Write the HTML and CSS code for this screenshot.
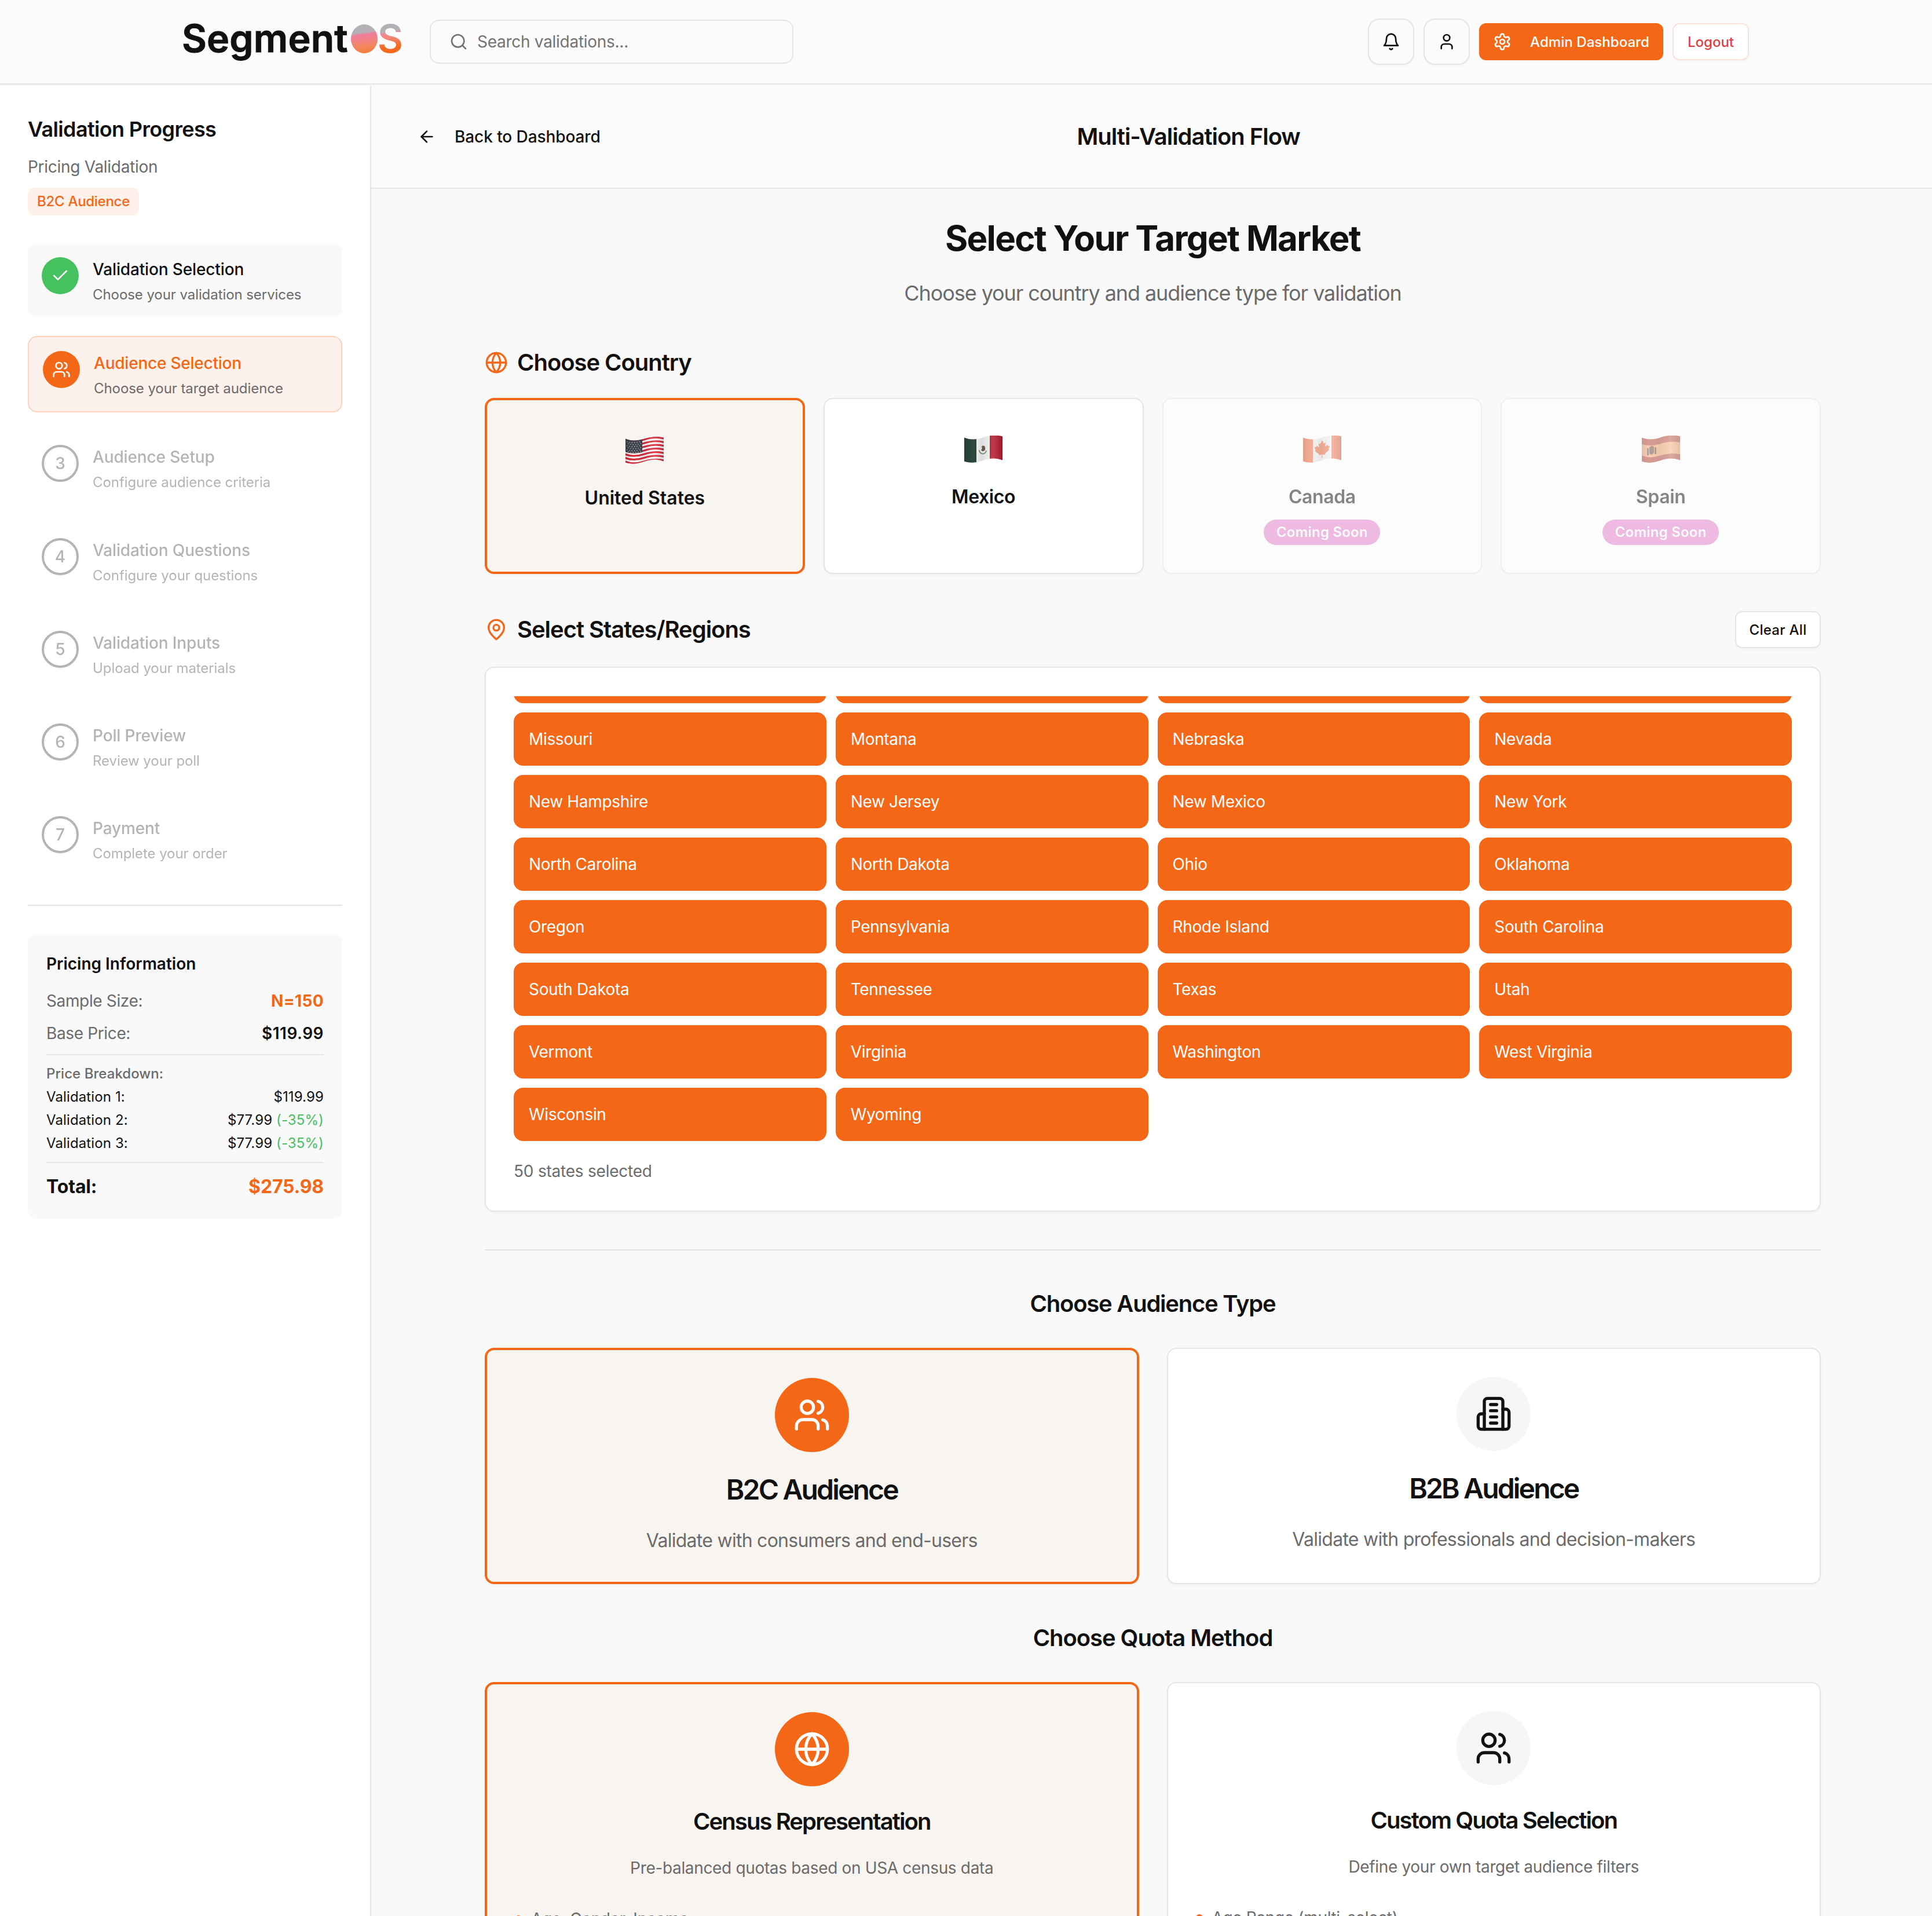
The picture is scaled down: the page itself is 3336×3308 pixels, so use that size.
FILE: index.html
```
<!DOCTYPE html>
<html lang="en">
  <head>
    <meta charset="utf-8">
    <title>SegmentOS</title>
    <link rel="stylesheet" href="styles.css">
  </head>

  <body>

    <!-- shared icons -->
    <svg class="sprite" width="0" height="0">
      <symbol id="icon-search" viewBox="0 0 24 24"><circle cx="11" cy="11" r="8"/><path d="m21 21-4.3-4.3"/></symbol>
      <symbol id="icon-bell" viewBox="0 0 24 24"><path d="M6 8a6 6 0 0 1 12 0c0 7 3 9 3 9H3s3-2 3-9"/><path d="M10.3 21a1.94 1.94 0 0 0 3.4 0"/></symbol>
      <symbol id="icon-user" viewBox="0 0 24 24"><path d="M19 21v-2a4 4 0 0 0-4-4H9a4 4 0 0 0-4 4v2"/><circle cx="12" cy="7" r="4"/></symbol>
      <symbol id="icon-settings" viewBox="0 0 24 24"><path d="M12.22 2h-.44a2 2 0 0 0-2 2v.18a2 2 0 0 1-1 1.73l-.43.25a2 2 0 0 1-2 0l-.15-.08a2 2 0 0 0-2.73.73l-.22.38a2 2 0 0 0 .73 2.73l.15.1a2 2 0 0 1 1 1.72v.51a2 2 0 0 1-1 1.74l-.15.09a2 2 0 0 0-.73 2.73l.22.38a2 2 0 0 0 2.73.73l.15-.08a2 2 0 0 1 2 0l.43.25a2 2 0 0 1 1 1.73V20a2 2 0 0 0 2 2h.44a2 2 0 0 0 2-2v-.18a2 2 0 0 1 1-1.73l.43-.25a2 2 0 0 1 2 0l.15.08a2 2 0 0 0 2.73-.73l.22-.39a2 2 0 0 0-.73-2.73l-.15-.08a2 2 0 0 1-1-1.74v-.5a2 2 0 0 1 1-1.74l.15-.09a2 2 0 0 0 .73-2.73l-.22-.38a2 2 0 0 0-2.73-.73l-.15.08a2 2 0 0 1-2 0l-.43-.25a2 2 0 0 1-1-1.73V4a2 2 0 0 0-2-2z"/><circle cx="12" cy="12" r="3"/></symbol>
      <symbol id="icon-arrow-left" viewBox="0 0 24 24"><path d="m12 19-7-7 7-7"/><path d="M19 12H5"/></symbol>
      <symbol id="icon-check" viewBox="0 0 24 24"><path d="M20 6 9 17l-5-5"/></symbol>
      <symbol id="icon-users" viewBox="0 0 24 24"><path d="M16 21v-2a4 4 0 0 0-4-4H6a4 4 0 0 0-4 4v2"/><circle cx="9" cy="7" r="4"/><path d="M22 21v-2a4 4 0 0 0-3-3.87"/><path d="M16 3.13a4 4 0 0 1 0 7.75"/></symbol>
      <symbol id="icon-globe" viewBox="0 0 24 24"><circle cx="12" cy="12" r="10"/><path d="M12 2a14.5 14.5 0 0 0 0 20 14.5 14.5 0 0 0 0-20"/><path d="M2 12h20"/></symbol>
      <symbol id="icon-pin" viewBox="0 0 24 24"><path d="M20 10c0 6-8 12-8 12s-8-6-8-12a8 8 0 0 1 16 0Z"/><circle cx="12" cy="10" r="3"/></symbol>
      <symbol id="icon-building" viewBox="0 0 24 24"><path d="M6 22V4a2 2 0 0 1 2-2h8a2 2 0 0 1 2 2v18Z"/><path d="M6 12H4a2 2 0 0 0-2 2v6a2 2 0 0 0 2 2h2"/><path d="M18 9h2a2 2 0 0 1 2 2v9a2 2 0 0 1-2 2h-2"/><path d="M10 6h4"/><path d="M10 10h4"/><path d="M10 14h4"/><path d="M10 18h4"/></symbol>
      <defs>
        <path id="wave" d="M-2 3C9 8 21 7 32 3.500S54-2 68 2"/>
        <clipPath id="flag-clip"><path d="M0 3.500C10 8 22 7 32 3.500S54-2 66 1.500V42.500C54 38 44 39 32 43S10 48 0 44.500Z"/></clipPath>
        <linearGradient id="flag-shade" x1="0" x2="1" y1="0" y2="0">
          <stop offset="0" stop-color="#000" stop-opacity=".18"/>
          <stop offset=".2" stop-color="#000" stop-opacity="0"/>
          <stop offset=".45" stop-color="#000" stop-opacity=".1"/>
          <stop offset=".75" stop-color="#fff" stop-opacity=".12"/>
          <stop offset="1" stop-color="#000" stop-opacity=".16"/>
        </linearGradient>
      </defs>
    </svg>

    <header class="topbar">
      <div class="topbar-inner">
        <div class="topbar-left">
          <div class="logo"><span class="logo-name">Segment</span><span class="logo-dot"></span><span class="logo-s">S</span></div>
          <div class="search">
            <svg class="icon"><use href="#icon-search"/></svg>
            <span>Search validations...</span>
          </div>
        </div>
        <div class="topbar-right">
          <button class="icon-btn"><svg class="icon"><use href="#icon-bell"/></svg></button>
          <button class="icon-btn"><svg class="icon"><use href="#icon-user"/></svg></button>
          <button class="btn btn-primary"><svg class="icon"><use href="#icon-settings"/></svg>Admin Dashboard</button>
          <button class="btn btn-logout">Logout</button>
        </div>
      </div>
    </header>

    <div class="layout">

      <aside class="sidebar">
        <h3 class="sidebar-title">Validation Progress</h3>
        <p class="sidebar-sub">Pricing Validation</p>
        <span class="sidebar-badge">B2C Audience</span>

        <div class="steps">
          <div class="step done">
            <div class="step-circle"><svg class="icon"><use href="#icon-check"/></svg></div>
            <div class="step-text"><div class="step-title">Validation Selection</div><div class="step-desc">Choose your validation services</div></div>
          </div>
          <div class="step active">
            <div class="step-circle"><svg class="icon"><use href="#icon-users"/></svg></div>
            <div class="step-text"><div class="step-title">Audience Selection</div><div class="step-desc">Choose your target audience</div></div>
          </div>
          <div class="step pending">
            <div class="step-circle">3</div>
            <div class="step-text"><div class="step-title">Audience Setup</div><div class="step-desc">Configure audience criteria</div></div>
          </div>
          <div class="step pending">
            <div class="step-circle">4</div>
            <div class="step-text"><div class="step-title">Validation Questions</div><div class="step-desc">Configure your questions</div></div>
          </div>
          <div class="step pending">
            <div class="step-circle">5</div>
            <div class="step-text"><div class="step-title">Validation Inputs</div><div class="step-desc">Upload your materials</div></div>
          </div>
          <div class="step pending">
            <div class="step-circle">6</div>
            <div class="step-text"><div class="step-title">Poll Preview</div><div class="step-desc">Review your poll</div></div>
          </div>
          <div class="step pending">
            <div class="step-circle">7</div>
            <div class="step-text"><div class="step-title">Payment</div><div class="step-desc">Complete your order</div></div>
          </div>
        </div>

        <div class="pricing-wrap">
          <div class="pricing">
            <h4 class="pricing-title">Pricing Information</h4>
            <div class="price-row"><span class="muted">Sample Size:</span><b class="sample">N=150</b></div>
            <div class="price-row"><span class="muted">Base Price:</span><b class="base">$119.99</b></div>
            <div class="breakdown">
              <div class="breakdown-title">Price Breakdown:</div>
              <div class="breakdown-row"><span>Validation 1:</span><span>$119.99</span></div>
              <div class="breakdown-row"><span>Validation 2:</span><span>$77.99 <i class="discount">(-35%)</i></span></div>
              <div class="breakdown-row"><span>Validation 3:</span><span>$77.99 <i class="discount">(-35%)</i></span></div>
            </div>
            <div class="total"><span>Total:</span><span class="total-price">$275.98</span></div>
          </div>
        </div>
      </aside>

      <main class="main">
        <div class="subheader">
          <a class="back"><svg class="icon"><use href="#icon-arrow-left"/></svg>Back to Dashboard</a>
          <h2 class="flow-title">Multi-Validation Flow</h2>
        </div>

        <div class="content">
          <h1 class="page-title">Select Your Target Market</h1>
          <p class="page-sub">Choose your country and audience type for validation</p>

          <div class="section-head">
            <h2 class="section-title"><svg class="icon"><use href="#icon-globe"/></svg>Choose Country</h2>
          </div>
          <div class="countries">
            <div class="country selected">
              <div class="flag">
                <svg viewBox="0 0 66 47">
                  <g clip-path="url(#flag-clip)">
                    <rect width="66" height="47" fill="#fff"/>
                    <g fill="none" stroke="#dd2c3c" stroke-width="3.200">
                      <use href="#wave" y="1.500"/><use href="#wave" y="7.800"/><use href="#wave" y="14.100"/><use href="#wave" y="20.400"/><use href="#wave" y="26.700"/><use href="#wave" y="33"/><use href="#wave" y="39.400"/>
                    </g>
                    <path d="M0 0H29V26.500C20 29 10 30 0 26Z" fill="#43464f"/>
                    <g fill="none" stroke="#c9ccd2" stroke-width="1.300" stroke-dasharray="1.400 3">
                      <path d="M2 8.500c9 3 17 2 26-1M4 12c9 3 16 2 25-1M2 15.500c9 3 17 2 26-1M4 19c9 3 16 2 25-1M2 22.500c9 3 17 2 26-1M4 25.500c9 3 16 2 25-1"/>
                    </g>
                    <rect width="66" height="47" fill="url(#flag-shade)"/>
                  </g>
                </svg>
              </div>
              <div class="country-name">United States</div>
            </div>
            <div class="country">
              <div class="flag">
                <svg viewBox="0 0 66 47">
                  <g clip-path="url(#flag-clip)">
                    <rect width="66" height="47" fill="#f6f6f6"/>
                    <rect width="21" height="47" fill="#2c4a3e"/>
                    <rect x="44" width="22" height="47" fill="#b61e31"/>
                    <path d="M26 25a6 6 0 0 0 12 1" fill="none" stroke="#8a9a80" stroke-width="2"/>
                    <path d="M30 19c3-3 6-1 6 2 1 3-1 6-4 6s-3-3-1-5z" fill="#6e5b4a"/>
                    <rect width="66" height="47" fill="url(#flag-shade)"/>
                  </g>
                </svg>
              </div>
              <div class="country-name">Mexico</div>
            </div>
            <div class="country disabled">
              <div class="flag">
                <svg viewBox="0 0 66 47">
                  <g clip-path="url(#flag-clip)">
                    <rect width="66" height="47" fill="#f4f4f4"/>
                    <rect width="17" height="47" fill="#f2602c"/>
                    <rect x="49" width="17" height="47" fill="#f2602c"/>
                    <path d="M33 8l3 6 3-2-1 7 4-3 1 2 3 0-2 5 1 2-7 6 .500 2-5.200-.500V39h-1v-6.500l-5.300 1.500.500-2-7-5 1-2-2-5 3-.500 1-2 4 3-1-7 3 1z" fill="#f2602c"/>
                    <rect width="66" height="47" fill="url(#flag-shade)"/>
                  </g>
                </svg>
              </div>
              <div class="country-name">Canada</div>
              <span class="soon">Coming Soon</span>
            </div>
            <div class="country disabled">
              <div class="flag">
                <svg viewBox="0 0 66 47">
                  <g clip-path="url(#flag-clip)">
                    <rect width="66" height="47" fill="#fba468"/>
                    <g fill="none" stroke="#b8402f" stroke-width="11"><use href="#wave" y="5"/><use href="#wave" y="36.500"/></g>
                    <path d="M9 22h3v12H9zM22 20h3v12h-3zM13 21c2-4 6-4 8-1v9c-1 4-6 5-8 2z" fill="#6b4b3c"/>
                    <rect width="66" height="47" fill="url(#flag-shade)"/>
                  </g>
                </svg>
              </div>
              <div class="country-name">Spain</div>
              <span class="soon">Coming Soon</span>
            </div>
          </div>

          <div class="section-head regions-head">
            <h2 class="section-title"><svg class="icon"><use href="#icon-pin"/></svg>Select States/Regions</h2>
            <button class="btn btn-outline">Clear All</button>
          </div>
          <div class="panel">
            <div class="states-scroll">
              <div class="states">
                <div class="state"></div><div class="state"></div><div class="state"></div><div class="state"></div>
                <div class="state">Missouri</div><div class="state">Montana</div><div class="state">Nebraska</div><div class="state">Nevada</div>
                <div class="state">New Hampshire</div><div class="state">New Jersey</div><div class="state">New Mexico</div><div class="state">New York</div>
                <div class="state">North Carolina</div><div class="state">North Dakota</div><div class="state">Ohio</div><div class="state">Oklahoma</div>
                <div class="state">Oregon</div><div class="state">Pennsylvania</div><div class="state">Rhode Island</div><div class="state">South Carolina</div>
                <div class="state">South Dakota</div><div class="state">Tennessee</div><div class="state">Texas</div><div class="state">Utah</div>
                <div class="state">Vermont</div><div class="state">Virginia</div><div class="state">Washington</div><div class="state">West Virginia</div>
                <div class="state">Wisconsin</div><div class="state">Wyoming</div>
              </div>
            </div>
            <div class="states-count">50 states selected</div>
          </div>

          <hr class="divider">

          <h2 class="center-title">Choose Audience Type</h2>
          <div class="choices">
            <div class="choice selected">
              <div class="choice-icon"><svg class="icon"><use href="#icon-users"/></svg></div>
              <h3 class="choice-title">B2C Audience</h3>
              <p class="choice-desc">Validate with consumers and end-users</p>
            </div>
            <div class="choice">
              <div class="choice-icon"><svg class="icon"><use href="#icon-building"/></svg></div>
              <h3 class="choice-title">B2B Audience</h3>
              <p class="choice-desc">Validate with professionals and decision-makers</p>
            </div>
          </div>

          <h2 class="center-title quota-head">Choose Quota Method</h2>
          <div class="choices quota">
            <div class="choice selected">
              <div class="choice-icon"><svg class="icon"><use href="#icon-globe"/></svg></div>
              <h3 class="choice-title">Census Representation</h3>
              <p class="choice-desc">Pre-balanced quotas based on USA census data</p>
              <ul class="features"><li>Age, Gender, Income</li></ul>
            </div>
            <div class="choice">
              <div class="choice-icon"><svg class="icon"><use href="#icon-users"/></svg></div>
              <h3 class="choice-title">Custom Quota Selection</h3>
              <p class="choice-desc">Define your own target audience filters</p>
              <ul class="features"><li>Age Range (multi-select)</li></ul>
            </div>
          </div>
        </div>
      </main>
    </div>

  </body>
</html>
```
FILE: styles.css
```
:root {
  --orange: #f36716;
  --text: #111111;
  --muted: #6b6b6b;
  --border: #e5e5e5;
}
* { box-sizing: border-box; }
body {
  margin: 0;
  height: 3308px;
  overflow: hidden;
  background: #f9f9f9;
  color: var(--text);
  font-family: Inter, "Liberation Sans", sans-serif;
  font-size: 28px;
  line-height: 40px;
}
h1, h2, h3, h4, p, ul { margin: 0; padding: 0; }
button { font-family: inherit; margin: 0; }
.sprite { position: absolute; }
.icon {
  width: 32px; height: 32px;
  flex: none;
  fill: none;
  stroke: currentColor;
  stroke-width: 2;
  stroke-linecap: round;
  stroke-linejoin: round;
}
.muted { color: var(--muted); letter-spacing: -0.013em; }

/* top bar */
.topbar {
  position: relative;
  height: 146px;
  background: #fbfbfb;
  border-bottom: 2px solid var(--border);
  box-shadow: 0 2px 0 #f7f6f4;
}
.topbar-inner {
  width: 2708px; height: 144px;
  margin: 0 auto;
  padding-right: 2px;
  display: flex; align-items: center; justify-content: space-between;
}
.topbar-left { display: flex; align-items: center; }
.logo {
  display: flex; align-items: center;
  width: 428px;
  font-size: 66px; font-weight: 600;
  line-height: 80px;
  padding-bottom: 12px;
}
.logo-name { letter-spacing: 0.003em; -webkit-text-stroke: 1px var(--text); }
.logo-dot {
  width: 46px; height: 50px;
  margin: 1px 0 0 5px;
  border-radius: 50%;
  background: linear-gradient(172deg, #b3b1b5 30%, #ee7f9b 36%, #f0808c 50%, #f5865a 75%, #f47a38);
}
.logo-s {
  font-size: 68px;
  color: transparent;
  background: linear-gradient(172deg, #b3b1b5 35%, #ef8a96 40%, #f28570 50%, #f36a20 68%);
  -webkit-background-clip: text;
  background-clip: text;
}
.search {
  display: flex; align-items: center; gap: 16px;
  width: 628px; height: 76px;
  padding-left: 32px;
  border: 2px solid var(--border);
  border-radius: 16px;
  color: #737373;
  letter-spacing: -0.01em;
}
.topbar-right { display: flex; align-items: center; gap: 16px; }
.icon-btn {
  display: flex; align-items: center; justify-content: center;
  width: 80px; height: 80px;
  background: #fbfbfb;
  border: 2px solid var(--border);
  border-radius: 20px;
  color: var(--text);
  box-shadow: 0 2px 3px rgba(0, 0, 0, 0.03);
}
.btn {
  display: flex; align-items: center; justify-content: center;
  height: 64px;
  padding: 0;
  border: 2px solid var(--border);
  border-radius: 12px;
  background: #fff;
  font-size: 24px; font-weight: 500;
  color: var(--text);
  box-shadow: 0 2px 3px rgba(0, 0, 0, 0.03);
}
.btn-primary { width: 318px; gap: 32px; background: var(--orange); border-color: var(--orange); color: #fff; letter-spacing: 0.002em; }
.btn-logout { width: 132px; border-color: #f9e1dd; color: #df3f42; }
.btn-outline { width: 148px; letter-spacing: 0.012em; }

/* sidebar */
.layout { display: flex; height: 3162px; }
.sidebar {
  flex: none;
  width: 641px;
  padding: 49px 48px 0;
  background: #fff;
  border-right: 2px solid var(--border);
}
.sidebar-title { font-size: 36px; line-height: 56px; font-weight: 600; letter-spacing: -0.018em; }
.sidebar-sub { margin-top: 17px; color: var(--muted); letter-spacing: -0.010em; }
.sidebar-badge {
  display: block;
  width: 192px; height: 48px;
  margin-top: 16px;
  background: #fdf1ea;
  border-radius: 12px;
  text-align: center;
  font-size: 24px; line-height: 48px; font-weight: 500;
  letter-spacing: -0.012em;
  color: var(--orange);
}
.steps { display: flex; flex-direction: column; gap: 32px; margin-top: 48px; }
.step {
  display: flex; gap: 24px;
  height: 128.300px;
  padding: 24px;
  border-radius: 16px;
}
.step-circle {
  display: flex; align-items: center; justify-content: center;
  width: 64px; height: 64px;
  border-radius: 50%;
  font-weight: 500;
}
.step-text { padding-top: 1px; }
.step-title { font-weight: 500; letter-spacing: -0.005em; }
.step-desc { margin-top: 8px; font-size: 24px; line-height: 32px; color: var(--muted); letter-spacing: -0.003em; }
.step.done { background: #f9f9f9; }
.step.done .step-circle { background: #45c15f; color: #fff; }
.step.active { height: 132px; background: #fdf1eb; border: 2px solid #fad3bd; }
.step.active .step-circle { background: var(--orange); color: #fff; }
.step.active .step-title { color: var(--orange); letter-spacing: -0.008em; }
.step.pending { color: var(--muted); opacity: 0.5; }
.step.pending .step-circle { border: 4px solid var(--muted); }

.pricing-wrap { margin-top: 48px; padding-top: 48px; border-top: 2px solid var(--border); }
.pricing { padding: 32px 32px 31px; background: #f9f9f9; border-radius: 16px; }
.pricing-title { font-size: 28px; font-weight: 600; margin-bottom: 24px; }
.price-row { display: flex; justify-content: space-between; margin-bottom: 16px; }
.sample { font-weight: 700; color: var(--orange); letter-spacing: 0.013em; }
.base { font-weight: 600; letter-spacing: 0.018em; }
.breakdown {
  padding: 16px 0;
  border-top: 2px solid var(--border);
  border-bottom: 2px solid var(--border);
  font-size: 24px; line-height: 32px;
}
.breakdown-title { font-weight: 500; color: var(--muted); letter-spacing: 0.002em; }
.breakdown-row { display: flex; justify-content: space-between; margin-top: 8px; letter-spacing: 0.005em; }
.discount { font-style: normal; color: #45c15f; }
.total { display: flex; justify-content: space-between; margin-top: 17px; font-size: 32px; line-height: 48px; font-weight: 700; letter-spacing: -0.005em; }
.total-price { color: var(--orange); }

/* main column */
.main { flex: 1; overflow: hidden; }
.subheader {
  display: grid;
  grid-template-columns: 1fr auto 1fr;
  align-items: center;
  height: 180px;
  padding: 2px 0 0 80px;
  background: #fbfbfb;
  border-bottom: 2px solid var(--border);
}
.back { display: flex; align-items: center; gap: 32px; font-weight: 500; letter-spacing: -0.003em; }
.flow-title { width: 386px; margin-left: 48px; font-size: 40px; line-height: 56px; font-weight: 600; letter-spacing: -0.026em; white-space: nowrap; }
.content { width: 2307px; margin-left: 196px; padding-top: 49px; }
.page-title { font-size: 60px; line-height: 72px; font-weight: 700; letter-spacing: -0.028em; text-align: center; }
.page-sub { margin-top: 31px; font-size: 36px; line-height: 56px; letter-spacing: -0.030em; color: var(--muted); text-align: center; }

.section-head { display: flex; align-items: center; justify-content: space-between; height: 56px; margin-top: 64px; }
.section-title {
  display: flex; align-items: center; gap: 16px;
  font-size: 40px; line-height: 56px; font-weight: 600;
  letter-spacing: -0.026em;
}
.section-title .icon { width: 40px; height: 40px; color: var(--orange); }
.regions-head { height: 64px; }

.countries { display: grid; grid-template-columns: repeat(4, 1fr); gap: 32px; margin-top: 33px; }
.country {
  display: flex; flex-direction: column; align-items: center;
  height: 304px;
  padding-top: 48px;
  background: #fff;
  border: 2px solid var(--border);
  border-radius: 16px;
  box-shadow: 0 2px 4px rgba(0, 0, 0, 0.04);
}
.country.selected, .choice.selected { background: #f8f4ef; border: 4px solid var(--orange); }
.country.disabled { opacity: 0.5; }
.flag { height: 80px; padding-top: 15px; }
.flag svg { display: block; width: 66px; height: 47px; }
.country-name { margin-top: 17px; font-size: 32px; line-height: 48px; font-weight: 600; letter-spacing: -0.012em; }
.country.selected .country-name { letter-spacing: 0; }
.soon {
  width: 201px; height: 44px;
  margin-top: 15px;
  border-radius: 22px;
  background: #e47cca;
  color: #fff;
  font-size: 24px; line-height: 44px; font-weight: 600;
  letter-spacing: 0.009em;
  text-align: center;
}

.panel {
  margin-top: 32px;
  padding: 49px 48px 48px;
  background: #fff;
  border: 2px solid var(--border);
  border-radius: 16px;
  box-shadow: 0 2px 4px rgba(0, 0, 0, 0.04);
}
/* list is scrolled to its end, the row above is cut off */
.states-scroll { display: flex; flex-direction: column; justify-content: flex-end; height: 768px; overflow: hidden; }
.states { display: grid; grid-template-columns: repeat(4, 1fr); gap: 16px; }
.state {
  height: 92px;
  padding: 0 26px;
  background: var(--orange);
  border-radius: 16px;
  color: #fff;
  line-height: 92px;
  letter-spacing: -0.012em;
}
.states-count { margin-top: 32px; color: var(--muted); letter-spacing: -0.008em; }
.divider { height: 2px; margin: 65px 0 0; border: 0; background: var(--border); }

.center-title { margin-top: 64px; font-size: 40px; line-height: 56px; font-weight: 600; letter-spacing: -0.031em; text-align: center; }
.quota-head { margin-top: 65px; letter-spacing: -0.027em; }
.choices { display: grid; grid-template-columns: 1fr 1fr; gap: 48px; margin-top: 48px; }
.choice {
  height: 408px;
  padding: 48px;
  background: #fff;
  border: 2px solid var(--border);
  border-radius: 16px;
  box-shadow: 0 2px 4px rgba(0, 0, 0, 0.04);
  text-align: center;
}
.choice-icon {
  display: flex; align-items: center; justify-content: center;
  width: 128px; height: 128px;
  margin: 0 auto;
  border-radius: 50%;
  background: #f6f6f6;
}
.choice-icon .icon { width: 64px; height: 64px; }
.choice.selected .choice-icon { background: var(--orange); color: #fff; }
.choice-title { margin-top: 33px; font-size: 48px; line-height: 64px; font-weight: 600; letter-spacing: -0.059em; }
.choice-desc { margin-top: 32px; font-size: 32px; line-height: 48px; color: var(--muted); letter-spacing: -0.023em; }
.quota .choice { height: 620px; }
.quota .choice-title { font-size: 40px; line-height: 56px; letter-spacing: -0.048em; }
.quota .choice-desc { font-size: 28px; line-height: 40px; letter-spacing: -0.012em; }
.features { margin-top: 48px; list-style: none; text-align: left; color: var(--muted); letter-spacing: -0.012em; }
.features li { display: flex; align-items: center; gap: 16px; }
.features li::before { content: ''; width: 12px; height: 12px; border-radius: 50%; background: var(--orange); }
```
